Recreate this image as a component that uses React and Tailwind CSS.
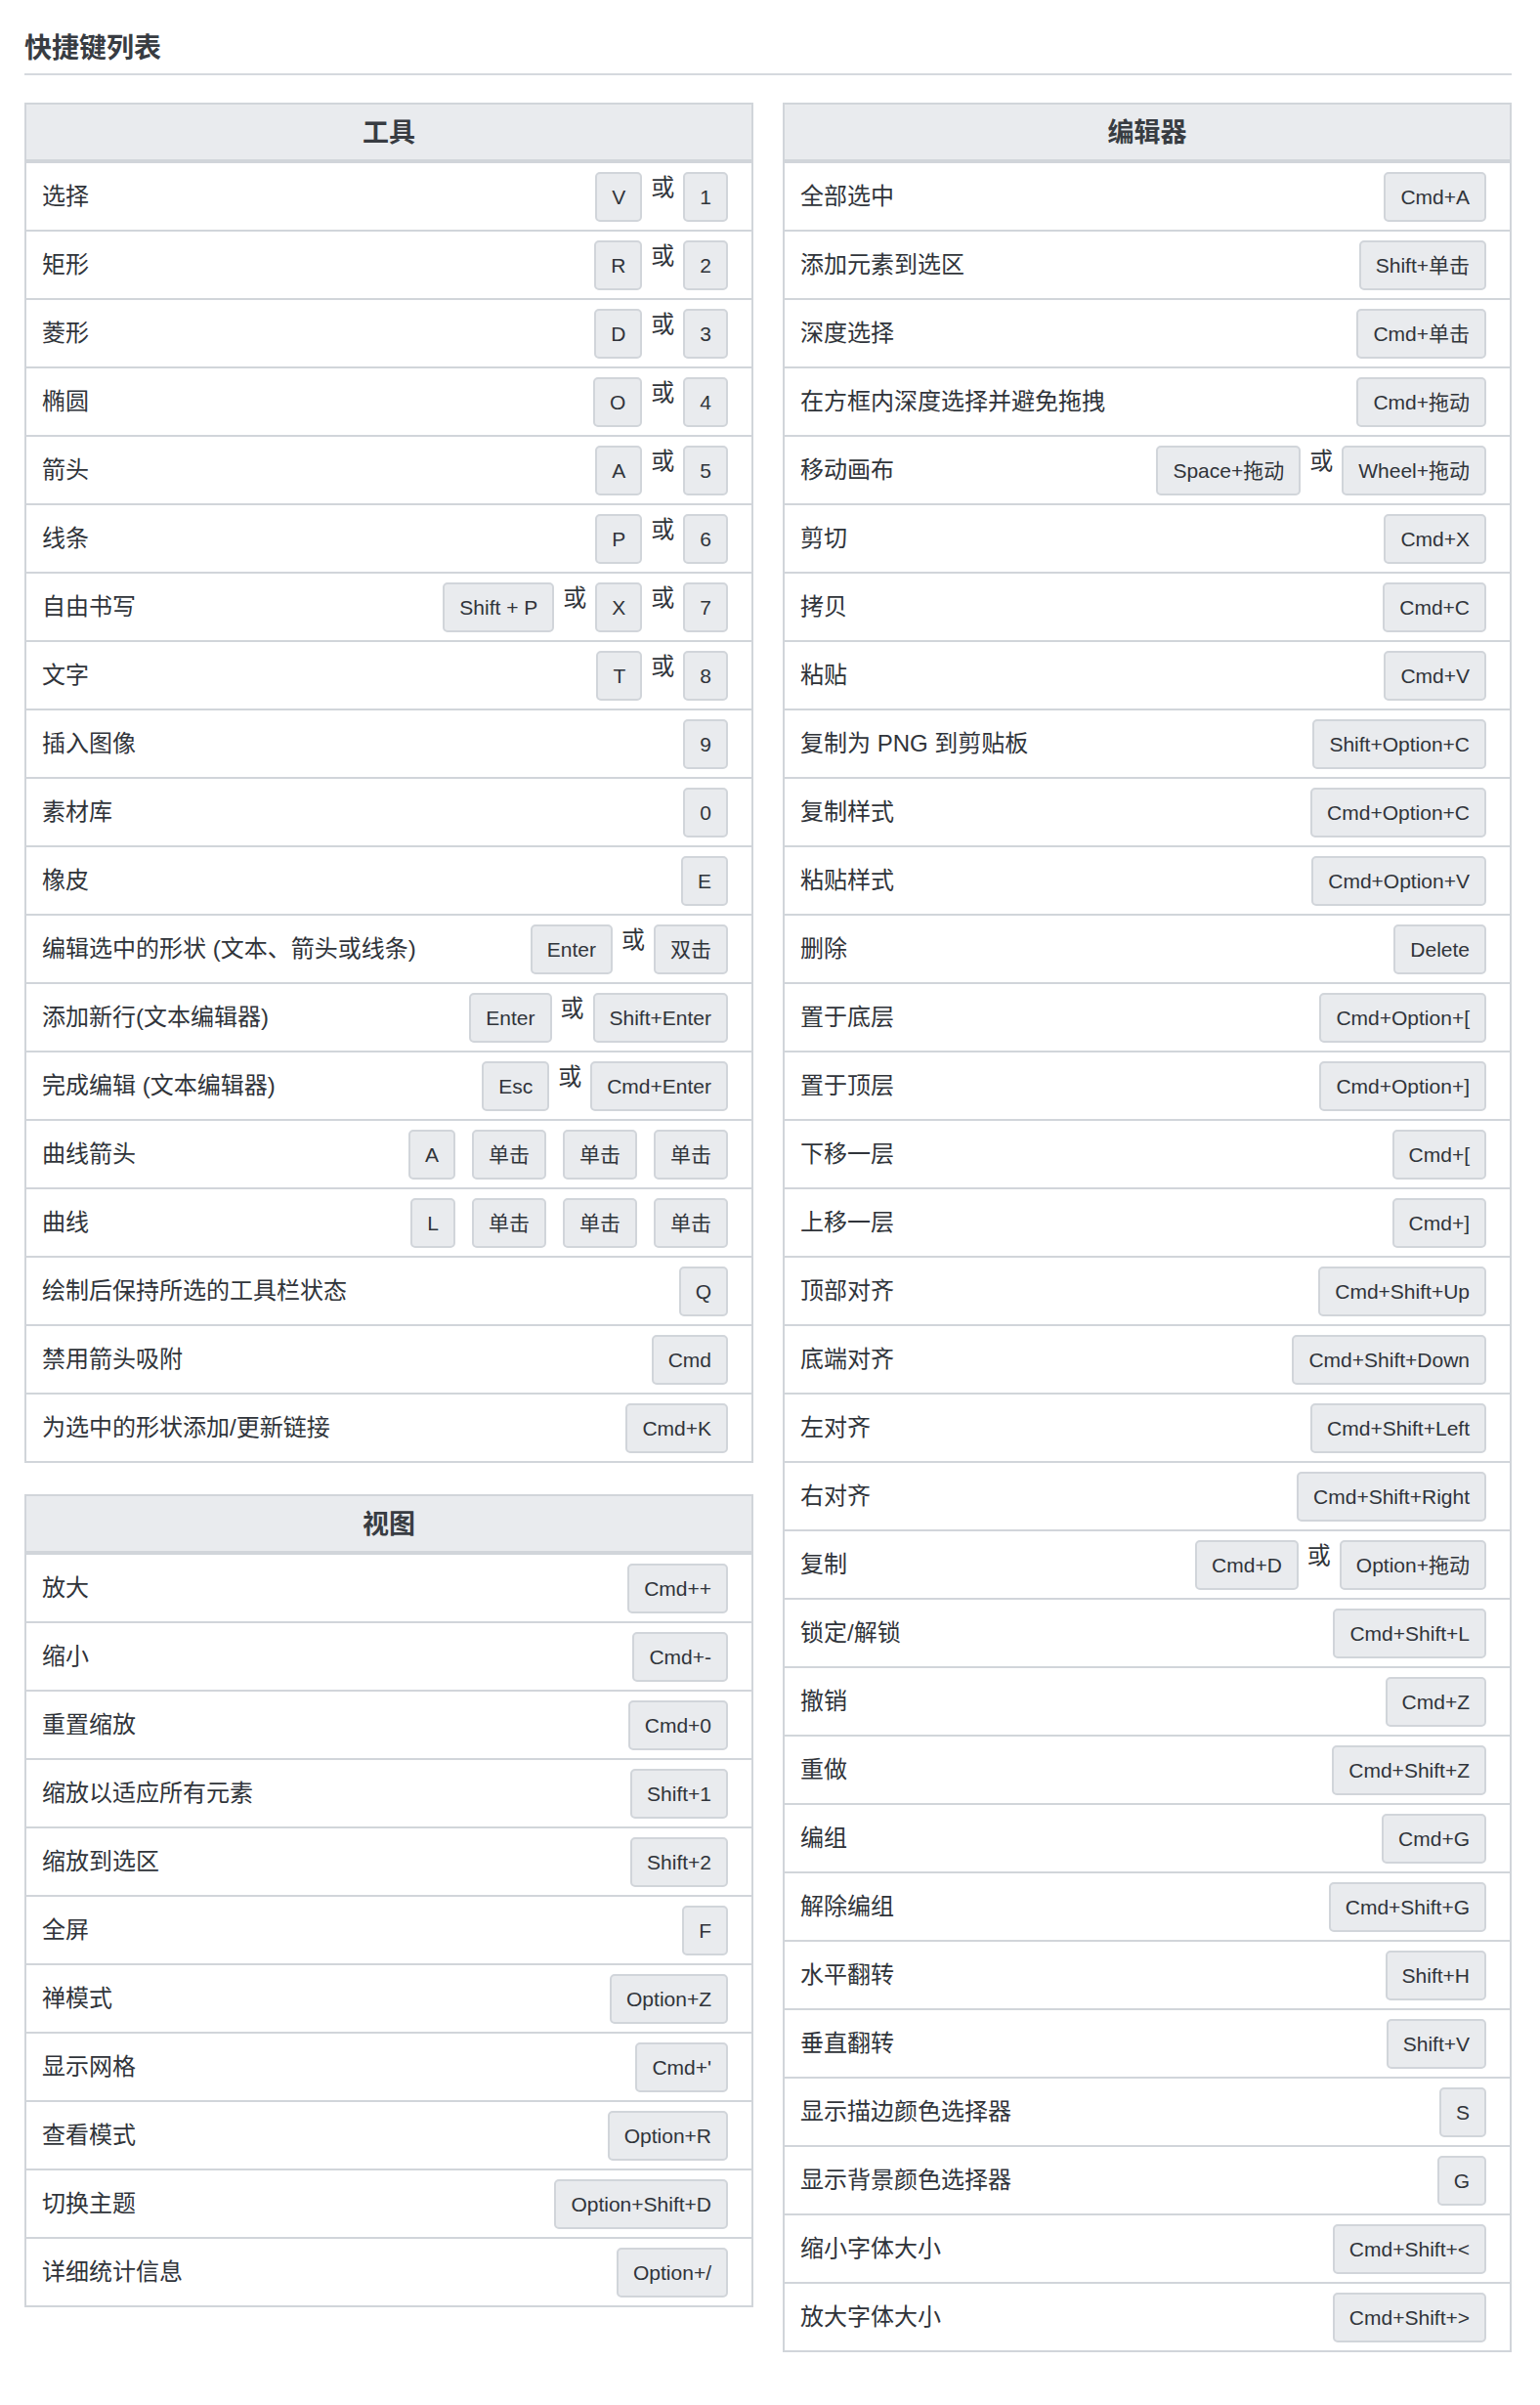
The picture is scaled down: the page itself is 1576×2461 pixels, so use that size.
import React from 'react';

// 快捷键数据："或" 作为分隔符，其余都是按键
const tools = [
  { label: '选择', keys: ['V', '或', '1'] },
  { label: '矩形', keys: ['R', '或', '2'] },
  { label: '菱形', keys: ['D', '或', '3'] },
  { label: '椭圆', keys: ['O', '或', '4'] },
  { label: '箭头', keys: ['A', '或', '5'] },
  { label: '线条', keys: ['P', '或', '6'] },
  { label: '自由书写', keys: ['Shift + P', '或', 'X', '或', '7'] },
  { label: '文字', keys: ['T', '或', '8'] },
  { label: '插入图像', keys: ['9'] },
  { label: '素材库', keys: ['0'] },
  { label: '橡皮', keys: ['E'] },
  { label: '编辑选中的形状 (文本、箭头或线条)', keys: ['Enter', '或', '双击'] },
  { label: '添加新行(文本编辑器)', keys: ['Enter', '或', 'Shift+Enter'] },
  { label: '完成编辑 (文本编辑器)', keys: ['Esc', '或', 'Cmd+Enter'] },
  { label: '曲线箭头', keys: ['A', '单击', '单击', '单击'] },
  { label: '曲线', keys: ['L', '单击', '单击', '单击'] },
  { label: '绘制后保持所选的工具栏状态', keys: ['Q'] },
  { label: '禁用箭头吸附', keys: ['Cmd'] },
  { label: '为选中的形状添加/更新链接', keys: ['Cmd+K'] },
];

const view = [
  { label: '放大', keys: ['Cmd++'] },
  { label: '缩小', keys: ['Cmd+-'] },
  { label: '重置缩放', keys: ['Cmd+0'] },
  { label: '缩放以适应所有元素', keys: ['Shift+1'] },
  { label: '缩放到选区', keys: ['Shift+2'] },
  { label: '全屏', keys: ['F'] },
  { label: '禅模式', keys: ['Option+Z'] },
  { label: '显示网格', keys: ["Cmd+'"] },
  { label: '查看模式', keys: ['Option+R'] },
  { label: '切换主题', keys: ['Option+Shift+D'] },
  { label: '详细统计信息', keys: ['Option+/'] },
];

const editor = [
  { label: '全部选中', keys: ['Cmd+A'] },
  { label: '添加元素到选区', keys: ['Shift+单击'] },
  { label: '深度选择', keys: ['Cmd+单击'] },
  { label: '在方框内深度选择并避免拖拽', keys: ['Cmd+拖动'] },
  { label: '移动画布', keys: ['Space+拖动', '或', 'Wheel+拖动'] },
  { label: '剪切', keys: ['Cmd+X'] },
  { label: '拷贝', keys: ['Cmd+C'] },
  { label: '粘贴', keys: ['Cmd+V'] },
  { label: '复制为 PNG 到剪贴板', keys: ['Shift+Option+C'] },
  { label: '复制样式', keys: ['Cmd+Option+C'] },
  { label: '粘贴样式', keys: ['Cmd+Option+V'] },
  { label: '删除', keys: ['Delete'] },
  { label: '置于底层', keys: ['Cmd+Option+['] },
  { label: '置于顶层', keys: ['Cmd+Option+]'] },
  { label: '下移一层', keys: ['Cmd+['] },
  { label: '上移一层', keys: ['Cmd+]'] },
  { label: '顶部对齐', keys: ['Cmd+Shift+Up'] },
  { label: '底端对齐', keys: ['Cmd+Shift+Down'] },
  { label: '左对齐', keys: ['Cmd+Shift+Left'] },
  { label: '右对齐', keys: ['Cmd+Shift+Right'] },
  { label: '复制', keys: ['Cmd+D', '或', 'Option+拖动'] },
  { label: '锁定/解锁', keys: ['Cmd+Shift+L'] },
  { label: '撤销', keys: ['Cmd+Z'] },
  { label: '重做', keys: ['Cmd+Shift+Z'] },
  { label: '编组', keys: ['Cmd+G'] },
  { label: '解除编组', keys: ['Cmd+Shift+G'] },
  { label: '水平翻转', keys: ['Shift+H'] },
  { label: '垂直翻转', keys: ['Shift+V'] },
  { label: '显示描边颜色选择器', keys: ['S'] },
  { label: '显示背景颜色选择器', keys: ['G'] },
  { label: '缩小字体大小', keys: ['Cmd+Shift+<'] },
  { label: '放大字体大小', keys: ['Cmd+Shift+>'] },
];

const Keys = ({ keys }) => (
  <div className="flex items-start shrink-0">
    {keys.map((k, i) =>
      k === '或' ? (
        <span key={i} className="mx-[9px] mt-[4px] text-[24px] leading-none">或</span>
      ) : (
        <kbd
          key={i}
          className={`h-[51px] px-[15px] flex items-center text-[21px] leading-none font-[inherit] bg-[#e9ebee] border-2 border-[#d1d5da] rounded-[5px] whitespace-nowrap ${
            i > 0 && keys[i - 1] !== '或' ? 'ml-[17px]' : ''
          }`}
        >
          {k}
        </kbd>
      )
    )}
  </div>
);

const Table = ({ title, rows }) => (
  <div className="border-2 border-[#d1d5da]">
    <div className="h-[60px] pt-[2px] bg-[#e9ebee] border-b-4 border-[#d1d5da] flex items-center justify-center text-[27px] font-bold text-[#383c42]">
      {title}
    </div>
    {rows.map((r) => (
      <div
        key={r.label}
        className="h-[70px] flex items-center justify-between pl-[16px] pr-[24px] border-b-2 border-[#d1d5da] last:border-b-0 last:h-[68px]"
      >
        <span className="text-[24px] whitespace-nowrap">{r.label}</span>
        <Keys keys={r.keys} />
      </div>
    ))}
  </div>
);

export default function App() {
  return (
    <div
      className="min-h-screen bg-white pl-[25px] pr-[29px] pt-[30px] pb-[54px] text-[#30343a]"
      style={{ fontFamily: '"Liberation Sans", "Noto Sans CJK SC", sans-serif' }}
    >
      <h1 className="text-[28px] font-bold leading-[40px] pb-[5px] border-b-2 border-[#d5d9de] text-[#383c42]">
        快捷键列表
      </h1>

      <div className="grid grid-cols-2 gap-x-[30px] mt-[28px] items-start">
        <div className="flex flex-col gap-[32px]">
          <Table title="工具" rows={tools} />
          <Table title="视图" rows={view} />
        </div>
        <Table title="编辑器" rows={editor} />
      </div>
    </div>
  );
}
